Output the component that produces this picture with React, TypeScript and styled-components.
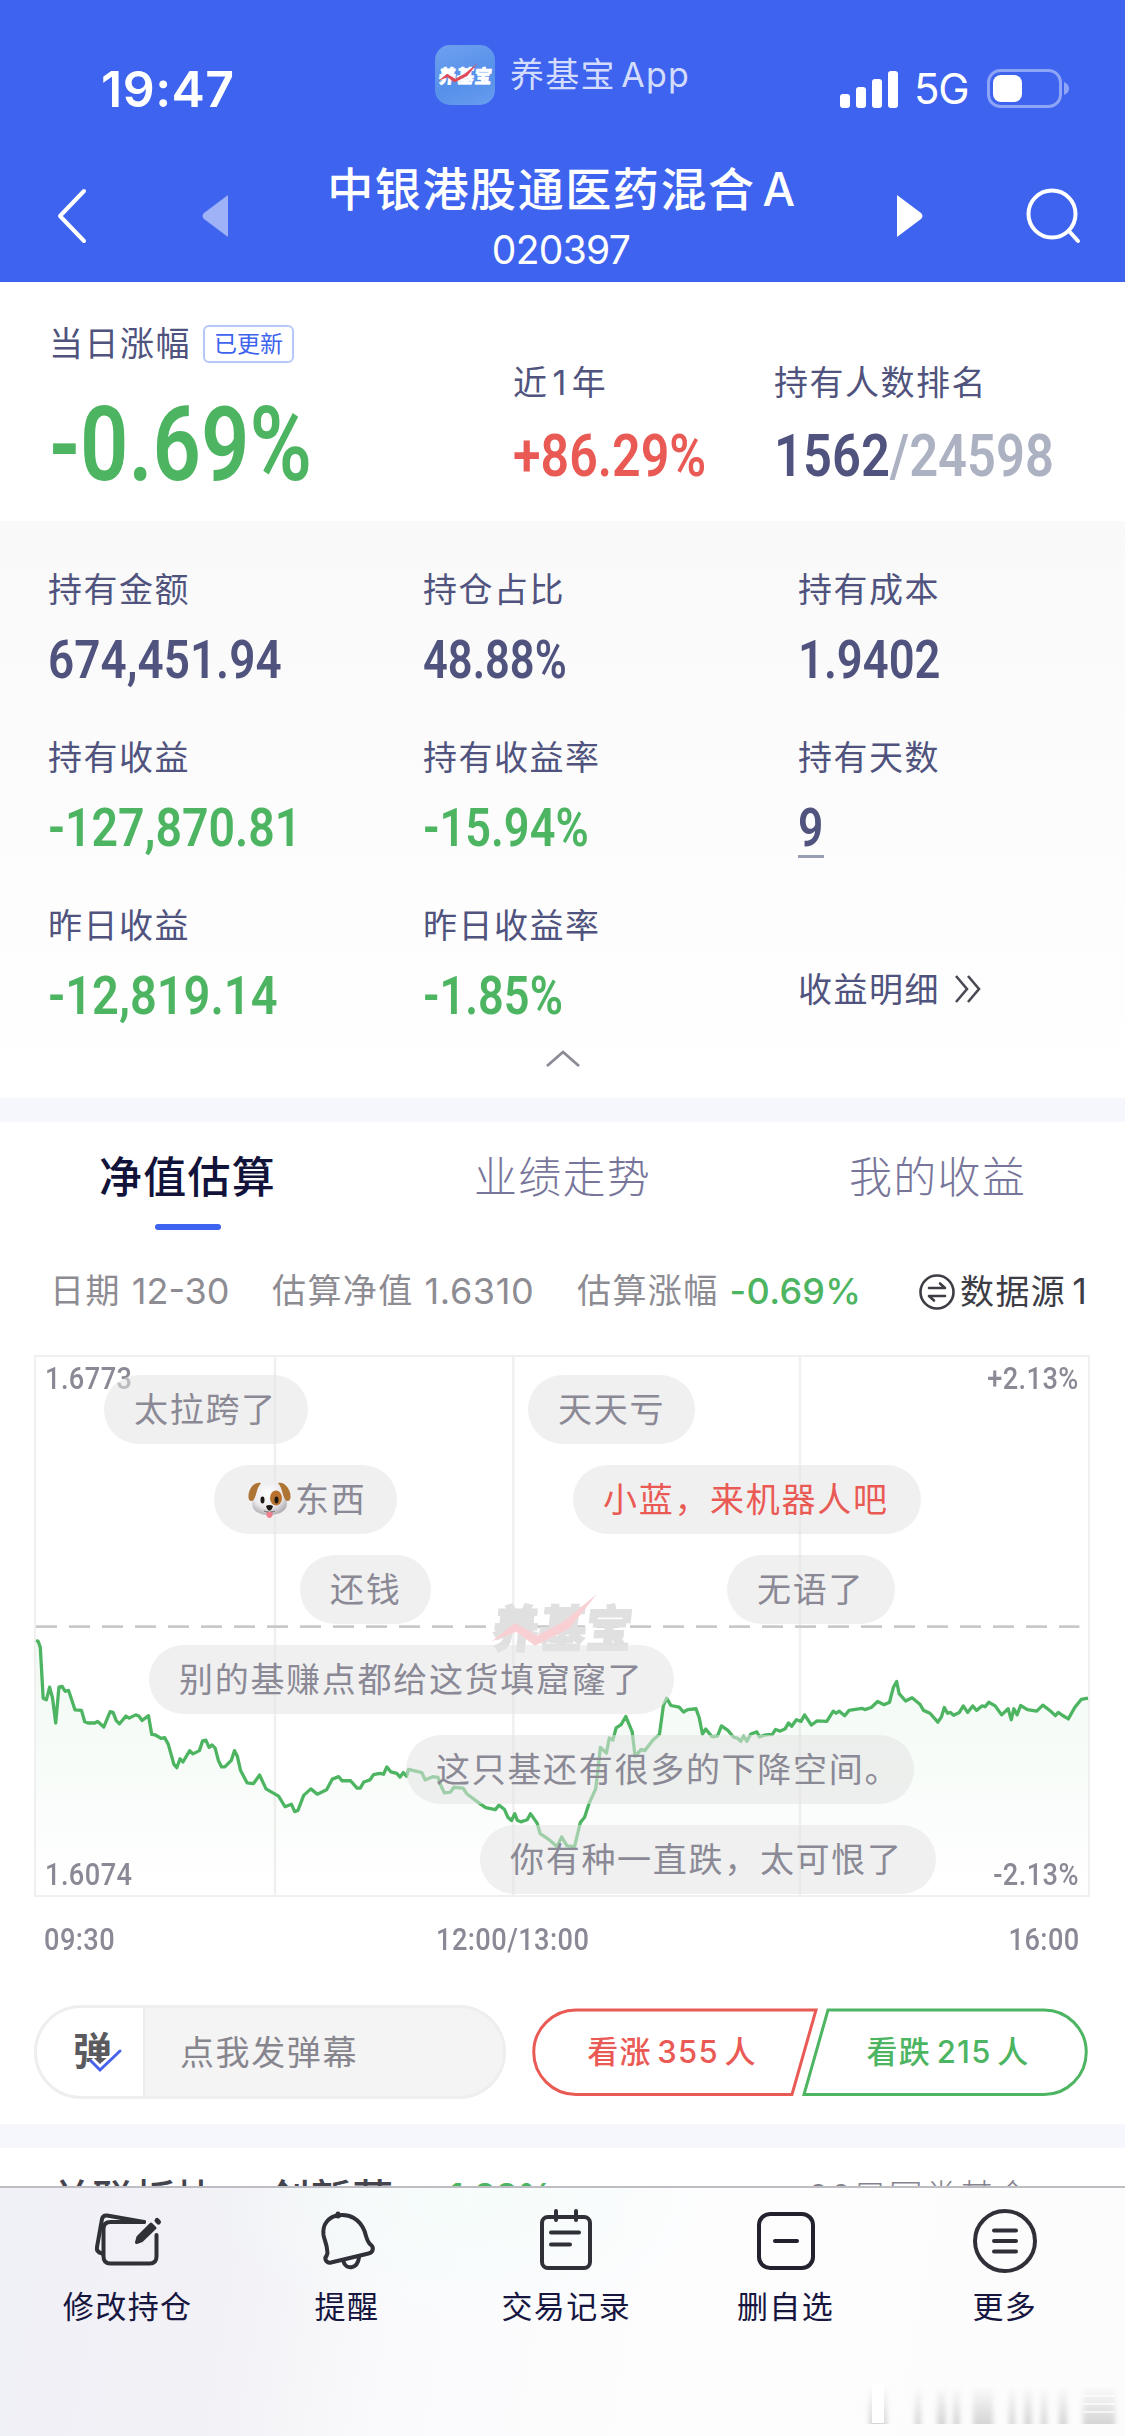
import React from "react";
import styled, { createGlobalStyle } from "styled-components";

const BLUE = "#3d63ef";
const INK = "#50537d";
const GREEN = "#4db562";
const RED = "#ea5a55";
const GRAY = "#8a8995";

const GlobalStyle = createGlobalStyle`
  * { box-sizing: border-box; }
  body {
    margin: 0;
    background: #fff;
    font-family: "Inter", "Noto Sans CJK SC", sans-serif;
  }
  svg { display: block; flex: none; overflow: visible; }
`;

const Screen = styled.main`
  width: 1125px;
  height: 2436px;
  display: flex;
  flex-direction: column;
  overflow: hidden;
  background: #fff;
  white-space: nowrap;
`;

/* ---------- header ---------- */

const Header = styled.header`
  height: 282px;
  flex: none;
  background: ${BLUE};
  color: #fff;
`;

const StatusBar = styled.div`
  height: 150px;
  display: flex;
  align-items: flex-start;
  padding-left: 101px;
`;

const Clock = styled.div`
  width: 334px;
  padding-top: 59px;
  font-size: 50px;
  font-weight: 600;
  line-height: 60px;
  letter-spacing: 0.5px;
`;

const AppTag = styled.div`
  width: 405px;
  margin-top: 45px;
  height: 60px;
  display: flex;
  align-items: center;
  gap: 15px;
  font-size: 34px;
  line-height: 58px;
  letter-spacing: 1.2px;
  word-spacing: -5px;
  color: #d3dcfc;
`;

const AppLogo = styled.div`
  width: 60px;
  height: 60px;
  border-radius: 15px;
  display: grid;
  place-items: center;
  background: linear-gradient(160deg, #6fa0ee, #5590ea 60%, #6a9dee);
`;

const Signals = styled.div`
  margin-top: 69px;
  height: 39px;
  display: flex;
  align-items: center;
`;

const Network = styled.span`
  width: 87px;
  flex: none;
  padding-left: 14px;
  font-size: 42px;
  line-height: 39px;
  letter-spacing: -1.2px;
`;

const NavBar = styled.nav`
  height: 132px;
  display: flex;
  align-items: flex-start;
`;

const NavSlot = styled.div<{ $w: number; $pad: number }>`
  width: ${(p) => p.$w}px;
  padding-left: ${(p) => p.$pad}px;
  height: 132px;
  display: flex;
  align-items: center;
`;

const TitleBlock = styled.div`
  width: 600px;
  text-align: center;
`;

const Title = styled.h1`
  margin: 10px 0 0;
  font-size: 46px;
  line-height: 58px;
  font-weight: 500;
  letter-spacing: 1.6px;
  word-spacing: -7px;
`;

const Code = styled.div`
  margin-top: 10px;
  font-size: 39px;
  line-height: 44px;
  letter-spacing: -0.7px;
  padding-right: 2px;
`;

/* ---------- shared text ---------- */

const Label = styled.span<{ $color?: string }>`
  display: block;
  font-size: 34px;
  line-height: 40px;
  letter-spacing: 1.5px;
  color: ${(p) => p.$color ?? INK};
`;

const Spaced = styled.span`
  margin: 0 4px;
`;

const Num = styled.span<{ $size: number; $color?: string; $scale?: number; $weight?: number; $space?: number; $origin?: string }>`
  display: inline-block;
  font-family: "Roboto", "Liberation Sans", sans-serif;
  font-size: ${(p) => p.$size}px;
  line-height: 1;
  font-weight: ${(p) => p.$weight ?? 600};
  letter-spacing: ${(p) => p.$space ?? 0}px;
  color: ${(p) => p.$color ?? INK};
  transform: scaleX(${(p) => p.$scale ?? 0.84});
  transform-origin: ${(p) => p.$origin ?? "left"} center;
`;

const Faint = styled.span`
  color: #adb2c3;
`;

/* ---------- day summary ---------- */

const Summary = styled.section`
  height: 239px;
  flex: none;
  display: grid;
  grid-template-columns: 464px 261px 1fr;
  padding-left: 49px;
`;

const SummaryItem = styled.div<{ $top: number; $gap: number }>`
  padding-top: ${(p) => p.$top}px;
  display: flex;
  flex-direction: column;
  align-items: flex-start;
  gap: ${(p) => p.$gap}px;
`;

const LabelLine = styled.div`
  display: flex;
  align-items: center;
  gap: 12px;
`;

const Badge = styled.span`
  width: 91px;
  height: 38px;
  border: 2px solid #b7c7fa;
  border-radius: 6px;
  font-size: 23px;
  line-height: 34px;
  text-align: center;
  color: ${BLUE};
`;

/* ---------- holdings ---------- */

const Holdings = styled.section`
  height: 577px;
  flex: none;
  padding-top: 49px;
  background: linear-gradient(#f9f9f9, #fff);
`;

const HoldingGrid = styled.div`
  display: grid;
  grid-template-columns: repeat(3, 375px);
  grid-auto-rows: 168px;
`;

const Cell = styled.div`
  padding-left: 48px;
  display: flex;
  flex-direction: column;
  align-items: flex-start;
  gap: 23px;
`;

const Underlined = styled.div`
  width: 26px;
  height: 57px;
  border-bottom: 3px solid #989eb3;
`;

const DetailLink = styled.div`
  height: 104px;
  display: flex;
  align-items: flex-end;
  gap: 14px;
`;

const LinkIcon = styled.div`
  padding-bottom: 7px;
`;

const Collapse = styled.div`
  margin-top: -24px;
  display: flex;
  justify-content: center;
`;

const Band = styled.div`
  height: 24px;
  flex: none;
  background: #f6f7fc;
`;

/* ---------- estimate card ---------- */

const Estimate = styled.section`
  height: 1002px;
  flex: none;
  background: #fff;
`;

const Tabs = styled.div`
  display: grid;
  grid-template-columns: repeat(3, 375px);
  height: 108px;
  padding-top: 28px;
`;

const Tab = styled.div<{ $active?: boolean }>`
  display: flex;
  flex-direction: column;
  align-items: center;
  gap: 19px;
  font-size: 43px;
  line-height: 55px;
  letter-spacing: 1.2px;
  font-weight: ${(p) => (p.$active ? 500 : 300)};
  color: ${(p) => (p.$active ? "#12133b" : "#77769a")};
  &::after {
    content: "";
    width: 66px;
    height: 6px;
    border-radius: 3px;
    background: ${(p) => (p.$active ? BLUE : "transparent")};
  }
`;

const InfoRow = styled.div`
  height: 125px;
  padding: 41px 0 0 50px;
  display: flex;
  align-items: flex-start;
`;

const Info = styled.div<{ $w: number; $color?: string }>`
  width: ${(p) => p.$w}px;
  display: flex;
  align-items: center;
  gap: 11px;
  font-size: 34px;
  line-height: 40px;
  letter-spacing: 1.4px;
  color: ${(p) => p.$color ?? "#8d8c93"};
`;

const Digits = styled.span<{ $color?: string; $weight?: number; $space?: number; $lead?: number }>`
  margin-left: ${(p) => p.$lead ?? 0}px;
  font-size: 36px;
  letter-spacing: ${(p) => p.$space ?? 0}px;
  font-weight: ${(p) => p.$weight ?? 400};
  color: ${(p) => p.$color ?? "inherit"};
`;

const Source = styled.div`
  display: flex;
  align-items: center;
  gap: 5px;
  font-size: 34px;
  line-height: 40px;
  letter-spacing: 1.4px;
  color: #3d3d45;
`;

const ChartFrame = styled.div`
  position: relative;
  width: 1056px;
  height: 542px;
  margin-left: 34px;
  border: 2.5px solid #f0f0f0;
`;

const Plot = styled.svg`
  width: 1052px;
  height: 538px;
  overflow: visible;
`;

const Corner = styled.div<{ $v: "top" | "bottom"; $h: "left" | "right" }>`
  position: absolute;
  ${(p) => p.$v}: 5px;
  ${(p) => p.$h}: 9px;
`;

const Watermark = styled.div`
  position: absolute;
  left: 455px;
  top: 229px;
`;

const Comment = styled.div<{ $x: number; $row: number; $w: number; $red?: boolean }>`
  position: absolute;
  left: ${(p) => p.$x - 36}px;
  top: ${(p) => 18 + p.$row * 90}px;
  width: ${(p) => p.$w}px;
  height: 69px;
  padding-left: 30px;
  border-radius: 35px;
  display: flex;
  align-items: center;
  font-size: 34px;
  line-height: 69px;
  letter-spacing: 1.7px;
  background: rgba(228, 228, 228, 0.55);
  color: ${(p) => (p.$red ? RED : GRAY)};
`;

const PuppySlot = styled.span`
  margin: 0 4px 0 4px;
`;

const Axis = styled.div`
  display: grid;
  grid-template-columns: 392px 1fr auto;
  padding: 26px 45px 0 44px;
  height: 108px;
`;

const ActionRow = styled.div`
  display: flex;
  padding-left: 34px;
  align-items: center;
  height: 94px;
`;

const InputPill = styled.div`
  width: 472px;
  height: 94px;
  border: 3px solid #eeeeee;
  border-radius: 47px;
  overflow: hidden;
  display: flex;
  background: #f4f4f4;
`;

const Toggle = styled.div`
  width: 108px;
  padding-left: 36px;
  background: #fff;
  border-right: 2px solid #ececec;
  display: flex;
  align-items: center;
`;

const Placeholder = styled.div`
  padding-left: 35px;
  font-size: 34px;
  line-height: 90px;
  letter-spacing: 1.6px;
  color: #87868e;
`;

const Vote = styled.div`
  margin-left: 25px;
`;

/* ---------- next card ---------- */

const Related = styled.section`
  height: 38px;
  flex: none;
  display: flex;
  align-items: flex-start;
  padding: 26px 0 0 51px;
`;

const RelatedTitle = styled.div<{ $w: number }>`
  width: ${(p) => p.$w}px;
  font-size: 41px;
  line-height: 50px;
  letter-spacing: 0.6px;
  font-weight: 500;
  color: #44444e;
`;

const RelatedRate = styled.div`
  width: 376px;
  font-size: 36px;
  line-height: 44px;
  letter-spacing: -0.6px;
  font-weight: 600;
  color: ${GREEN};
`;

const RelatedMore = styled.div`
  font-size: 34px;
  line-height: 45px;
  letter-spacing: 1.6px;
  font-weight: 300;
  color: #85848e;
`;

/* ---------- bottom bar ---------- */

const BottomBar = styled.footer`
  position: relative;
  height: 250px;
  flex: none;
  display: grid;
  grid-template-columns: repeat(5, 219.3px);
  padding-left: 18px;
  border-top: 2px solid #bdbdc3;
  background:
    radial-gradient(ellipse 260px 130px at 460px 10px, rgba(244, 253, 250, 0.8), rgba(244, 253, 250, 0)),
    linear-gradient(100deg, #f0f0f7 0%, #f1f1f6 20%, #fafafc 36%, #fdfdfe 60%, #fcfcfd 100%);
`;

const Action = styled.div`
  display: flex;
  flex-direction: column;
  align-items: center;
  padding-top: 18px;
  gap: 9px;
  font-size: 31px;
  line-height: 48px;
  letter-spacing: 1.4px;
  color: #17163f;
`;

const Smudge = styled.div`
  position: absolute;
  right: 6px;
  bottom: 8px;
`;

const SAMPLES: [number, number][] = [
  [98, 735], [104, 737], [110, 752], [118, 877], [127, 881], [136, 850], [144, 876], [153, 938], [162, 850], [171, 848],
  [179, 860], [189, 858], [207, 906], [225, 907], [234, 935], [243, 938], [262, 938], [270, 934], [287, 948], [305, 910],
  [313, 912], [322, 932], [331, 940], [349, 921], [358, 926], [376, 918], [385, 921], [394, 932], [412, 920], [421, 966],
  [430, 967], [447, 976], [457, 974], [467, 990], [483, 1040], [491, 1048], [500, 1026], [508, 1034], [527, 1006],
  [536, 1014], [554, 1006], [563, 982], [572, 980], [581, 998], [589, 992], [598, 1000], [607, 1030], [616, 1046],
  [625, 1046], [643, 1030], [652, 1006], [660, 1020], [669, 1055], [687, 1085], [705, 1087], [722, 1066], [740, 1100],
  [775, 1118], [793, 1144], [811, 1138], [820, 1156], [829, 1153], [845, 1116], [865, 1100], [883, 1113], [909, 1102],
  [925, 1076], [943, 1070], [952, 1080], [976, 1080], [994, 1098], [1003, 1098], [1013, 1083], [1030, 1078],
  [1040, 1065], [1058, 1062], [1068, 1064], [1077, 1046], [1088, 1058], [1105, 1062], [1114, 1071], [1123, 1060],
  [1132, 1069], [1138, 1052], [1175, 1060], [1184, 1078], [1205, 1070], [1220, 1072], [1228, 1092], [1238, 1110],
  [1255, 1108], [1264, 1096], [1290, 1098], [1300, 1112], [1335, 1135], [1353, 1146], [1380, 1151], [1390, 1140],
  [1405, 1150], [1415, 1170], [1425, 1178], [1434, 1161], [1441, 1177], [1451, 1181], [1469, 1176], [1478, 1161],
  [1497, 1185], [1505, 1210], [1530, 1225], [1552, 1242], [1565, 1218], [1580, 1240], [1601, 1242], [1617, 1183],
  [1629, 1170], [1642, 1135], [1660, 1100], [1668, 1040], [1673, 998], [1690, 1012], [1698, 975], [1708, 980],
  [1717, 950], [1731, 942], [1744, 922], [1762, 960], [1770, 1020], [1787, 1003], [1797, 1006], [1820, 980],
  [1838, 966], [1849, 895], [1858, 877], [1870, 895], [1893, 899], [1905, 911], [1917, 905], [1940, 903], [1949, 925],
  [1958, 965], [1967, 953], [1985, 972], [2000, 970], [2011, 945], [2030, 957], [2045, 973], [2055, 975], [2065, 983],
  [2073, 970], [2082, 983], [2093, 965], [2110, 960], [2117, 972], [2135, 967], [2153, 966], [2162, 954], [2175, 958],
  [2189, 952], [2198, 938], [2207, 946], [2220, 930], [2233, 934], [2243, 918], [2262, 943], [2278, 933], [2305, 934],
  [2323, 909], [2331, 914], [2340, 909], [2355, 920], [2367, 907], [2403, 902], [2411, 905], [2429, 900], [2447, 885],
  [2465, 893], [2480, 887], [2491, 850], [2500, 836], [2507, 866], [2525, 884], [2543, 876], [2565, 892], [2575, 907],
  [2593, 914], [2615, 936], [2625, 923], [2633, 900], [2642, 914], [2650, 912], [2659, 919], [2675, 912], [2686, 896],
  [2698, 912], [2712, 896], [2723, 907], [2738, 896], [2747, 898], [2757, 887], [2775, 896], [2793, 918], [2811, 903],
  [2820, 930], [2827, 903], [2836, 918], [2846, 895], [2865, 905], [2891, 909], [2908, 894], [2930, 909], [2943, 920],
  [2951, 912], [2962, 919], [2979, 928], [2997, 900], [3015, 880], [3034, 877],
];

const linePoints = SAMPLES.map((p) => p.join(",")).join(" ");

const holdings = [
  { label: "持有金额", value: "674,451.94", scale: 0.85 },
  { label: "持仓占比", value: "48.88%", scale: 0.805 },
  { label: "持有成本", value: "1.9402", scale: 0.84 },
  { label: "持有收益", value: "-127,870.81", color: GREEN, scale: 0.86 },
  { label: "持有收益率", value: "-15.94%", color: GREEN, scale: 0.835 },
  { label: "持有天数", value: "9", underline: true, scale: 0.82 },
  { label: "昨日收益", value: "-12,819.14", color: GREEN, scale: 0.87 },
  { label: "昨日收益率", value: "-1.85%", color: GREEN, scale: 0.835 },
];

const comments = [
  { text: "太拉跨了", x: 104, row: 0, w: 204 },
  { text: "天天亏", x: 528, row: 0, w: 167 },
  { text: "东西", x: 214, row: 1, w: 183, dog: true },
  { text: "小蓝，来机器人吧", x: 573, row: 1, w: 348, red: true },
  { text: "还钱", x: 300, row: 2, w: 131 },
  { text: "无语了", x: 727, row: 2, w: 168 },
  { text: "别的基赚点都给这货填窟窿了", x: 149, row: 3, w: 525 },
  { text: "这只基还有很多的下降空间。", x: 406, row: 4, w: 508 },
  { text: "你有种一直跌，太可恨了", x: 480, row: 5, w: 456 },
];

const AxisNum = ({ children, origin }: { children: string; origin?: string }) => (
  <Num $size={32} $color={GRAY} $scale={0.85} $weight={500} $space={0.5} $origin={origin}>{children}</Num>
);

const Wordmark = ({ width, fill, stroke }: { width: number; fill: string; stroke: string }) => (
  <svg width={width} height={width * 0.54} viewBox="0 0 144 78">
    <g transform="skewX(-6) translate(4 2) scale(1.05 1.12)">
      <text x="2" y="53" fontSize="44.500" fontWeight="900" fontFamily="Noto Sans CJK SC" fill={fill} stroke={fill} strokeWidth="1.500">养基宝</text>
    </g>
    <path d="M0 56L24 37L46 50L72 36L106 8L78 43L44 60L25 46Z" fill={stroke} />
  </svg>
);

const Puppy = () => (
  <svg width="43" height="38" viewBox="0 0 43 38">
    <defs>
      <radialGradient id="fur" cx="0.45" cy="0.35" r="0.65">
        <stop offset="0" stopColor="#ffffff" />
        <stop offset="0.65" stopColor="#ebe9ec" />
        <stop offset="1" stopColor="#b5b1b8" />
      </radialGradient>
    </defs>
    <path d="M7 9C10 2 16 1 21.500 1S33 2 36 9C38 15 40 22 38 27C35 32 28 34 21.500 34S8 32 5 27C3 22 5 15 7 9Z" fill="url(#fur)" />
    <path d="M13 2C6 0 0 9 .5 16c0 4 3 5 5 3C9 14 8 8 13 2ZM30 2c7-2 13 7 12.500 14c0 4-3 5-5 3C34 14 35 8 30 2Z" fill="#ad7434" />
    <ellipse cx="28" cy="17" rx="6" ry="7.500" fill="#b8722d" />
    <ellipse cx="14.500" cy="19" rx="2" ry="3.400" fill="#1d1713" />
    <ellipse cx="28.500" cy="19" rx="2" ry="3.400" fill="#1d1713" />
    <path d="M18.500 31h6v4q-3 4-6 0Z" fill="#ee7f8d" />
    <path d="M18 25q3.500-2 7 0q-1 4-3.500 4.500q-2.500-.5-3.500-4.500Z" fill="#1d1713" />
    <path d="M16 30q4 2 5.500-1q1.500 3 5.500 1" stroke="#77706c" fill="none" />
  </svg>
);

const iconStroke = { fill: "none", stroke: "#303038", strokeWidth: 4, strokeLinecap: "round", strokeLinejoin: "round" } as const;

const EditIcon = () => (
  <svg width="68" height="68" viewBox="94 2206 68 68" {...iconStroke}>
    <path d="M144 2222H110.500Q103.500 2222 103.500 2229V2256.500Q103.500 2263.500 110.500 2263.500H149.500Q156.500 2263.500 156.500 2256.500V2235" />
    <path d="M144 2222L107 2215.500Q103 2215 102 2219L97 2247Q96 2252 102 2253.500" />
    <path d="M136.500 2242.500L138 2237L151 2224L155 2228L142 2240.500Z" fill="#303038" strokeWidth="3" />
    <path d="M157 2220.500L158.500 2222" strokeWidth="5" />
  </svg>
);

const BellIcon = () => (
  <svg width="68" height="68" viewBox="314 2206 68 68" {...iconStroke}>
    <path d="M328.500 2253C328 2243 325.500 2241 324.500 2235C323 2224 330 2217.500 337 2215.800C351 2212.500 361 2220 365.500 2231C367.500 2237 368 2242 371.500 2244.500C375.500 2247.500 374 2252.500 369.500 2253.500L332 2262.500C327 2263.500 325 2258.500 327.500 2256Z" />
    <path d="M339 2216V2214" strokeWidth="5" />
    <path d="M344.500 2261.500C346.500 2270 358.500 2269.500 360 2257.500" />
  </svg>
);

const RecordIcon = () => (
  <svg width="68" height="68" viewBox="533 2206 68 68" {...iconStroke}>
    <rect x="543" y="2217" width="48" height="51" rx="6" />
    <path d="M557 2211V2220M577 2211V2220M552 2232.500H580M552 2244.500H571" />
  </svg>
);

const RemoveIcon = () => (
  <svg width="68" height="68" viewBox="752 2206 68 68" {...iconStroke} stroke="#22222e">
    <rect x="759" y="2214" width="54" height="54" rx="11" />
    <path d="M775 2241H797" />
  </svg>
);

const MoreIcon = () => (
  <svg width="68" height="68" viewBox="971 2206 68 68" {...iconStroke}>
    <circle cx="1005" cy="2241" r="30" />
    <path d="M994 2230.500H1016M994 2241H1016M994 2251.500H1016" />
  </svg>
);

const actions = [
  { label: "修改持仓", icon: <EditIcon /> },
  { label: "提醒", icon: <BellIcon /> },
  { label: "交易记录", icon: <RecordIcon /> },
  { label: "删自选", icon: <RemoveIcon /> },
  { label: "更多", icon: <MoreIcon /> },
];

export default function App() {
  return (
    <Screen>
      <GlobalStyle />
      <Header>
        <StatusBar>
          <Clock>19:47</Clock>
          <AppTag>
            <AppLogo>
              <Wordmark width={54} fill="#fff" stroke="#dd4a5c" />
            </AppLogo>
            养基宝 App
          </AppTag>
          <Signals>
            <svg width="60" height="38" viewBox="0 0 60 38" fill="#fff">
              <rect x="0" y="24" width="10" height="14" rx="3" />
              <rect x="16" y="17" width="10" height="21" rx="3" />
              <rect x="32" y="9" width="10" height="29" rx="3" />
              <rect x="48" y="1" width="10" height="37" rx="3" />
            </svg>
            <Network>5G</Network>
            <svg width="84" height="39" viewBox="0 0 84 39">
              <rect x="1.500" y="1.500" width="72" height="36" rx="12" fill="none" stroke="#8ea5f7" strokeWidth="3" />
              <rect x="6" y="6" width="29" height="27" rx="8" fill="#fff" />
              <path d="M77 13q5 2 5 6.500t-5 6.500Z" fill="#8ea5f7" />
            </svg>
          </Signals>
        </StatusBar>
        <NavBar>
          <NavSlot $w={202} $pad={56}>
            <svg width="34" height="56" viewBox="0 0 34 56" fill="none" stroke="#fff" strokeWidth="4" strokeLinecap="round" strokeLinejoin="round">
              <path d="M28 3L4 28L28 53" />
            </svg>
          </NavSlot>
          <NavSlot $w={60} $pad={0}>
            <svg width="27" height="42" viewBox="0 0 27 42"><path d="M26 0V42L2 24Q-1 21 2 18Z" fill="#9fb2f8" /></svg>
          </NavSlot>
          <TitleBlock>
            <Title>中银港股通医药混合 A</Title>
            <Code>020397</Code>
          </TitleBlock>
          <NavSlot $w={163} $pad={34}>
            <svg width="27" height="42" viewBox="0 0 27 42"><path d="M1 0V42L25 24Q28 21 25 18Z" fill="#fff" /></svg>
          </NavSlot>
          <NavSlot $w={100} $pad={0}>
            <svg width="58" height="58" viewBox="0 0 58 58" fill="none" stroke="#fff" strokeWidth="4" strokeLinecap="round">
              <circle cx="27" cy="27" r="23.500" />
              <path d="M44 44L53 54" />
            </svg>
          </NavSlot>
        </NavBar>
      </Header>

      <Summary>
        <SummaryItem $top={42} $gap={29}>
          <LabelLine>
            <Label>当日涨幅</Label>
            <Badge>已更新</Badge>
          </LabelLine>
          <Num $size={104} $color={GREEN} $scale={0.815}>-0.69%</Num>
        </SummaryItem>
        <SummaryItem $top={81} $gap={23}>
          <Label>近<Spaced>1</Spaced>年</Label>
          <Num $size={60} $color={RED} $scale={0.835}>+86.29%</Num>
        </SummaryItem>
        <SummaryItem $top={81} $gap={23}>
          <Label>持有人数排名</Label>
          <Num $size={60} $scale={0.845}>1562<Faint>/24598</Faint></Num>
        </SummaryItem>
      </Summary>

      <Holdings>
        <HoldingGrid>
          {holdings.map((h) => (
            <Cell key={h.label}>
              <Label>{h.label}</Label>
              {h.underline ? (
                <Underlined><Num $size={54} $scale={h.scale}>{h.value}</Num></Underlined>
              ) : (
                <Num $size={54} $color={h.color} $scale={h.scale}>{h.value}</Num>
              )}
            </Cell>
          ))}
          <Cell>
            <DetailLink>
              <Label>收益明细</Label>
              <LinkIcon>
                <svg width="28" height="28" viewBox="0 0 28 28" fill="none" stroke="#4a4a55" strokeWidth="2.600">
                  <path d="M2 1L13 14L2 27M14 1L25 14L14 27" />
                </svg>
              </LinkIcon>
            </DetailLink>
          </Cell>
        </HoldingGrid>
        <Collapse>
          <svg width="36" height="18" viewBox="0 0 36 18" fill="none" stroke="#8b8b95" strokeWidth="2.800">
            <path d="M2 16L18 2L34 16" />
          </svg>
        </Collapse>
      </Holdings>
      <Band />

      <Estimate>
        <Tabs>
          <Tab $active>净值估算</Tab>
          <Tab>业绩走势</Tab>
          <Tab>我的收益</Tab>
        </Tabs>
        <InfoRow>
          <Info $w={222}>日期<Digits>12-30</Digits></Info>
          <Info $w={305}>估算净值<Digits $space={0.6}>1.6310</Digits></Info>
          <Info $w={342}>估算涨幅<Digits $color={GREEN} $weight={500} $space={0.3}>-0.69%</Digits></Info>
          <Source>
            <svg width="36" height="36" viewBox="0 0 36 36" fill="none" stroke="#3d3d45" strokeWidth="2.600" strokeLinecap="round" strokeLinejoin="round">
              <circle cx="18" cy="18" r="16.500" />
              <path d="M10 14H26L21 9.500M26 22H10L15 26.500" />
            </svg>
            <span>数据源<Digits $lead={6}>1</Digits></span>
          </Source>
        </InfoRow>
        <ChartFrame>
          <Plot viewBox="98 38 2936 1323" preserveAspectRatio="none">
            <defs>
              <linearGradient id="area" x1="0" y1="0" x2="0" y2="1">
                <stop offset="0" stopColor={GREEN} stopOpacity="0.08" />
                <stop offset="1" stopColor={GREEN} stopOpacity="0" />
              </linearGradient>
            </defs>
            <path d="M765 38V1361M1430 38V1361M2230 38V1361" stroke="#f0f0f0" strokeWidth="2.500" vectorEffect="non-scaling-stroke" />
            <path d="M98 701H3010" stroke="#c9c9c9" strokeWidth="2.800" strokeDasharray="21 12" vectorEffect="non-scaling-stroke" />
            <polygon points={`98,1361 ${linePoints} 3034,1361`} fill="url(#area)" />
            <polyline points={linePoints} fill="none" stroke={GREEN} strokeWidth="3.300" strokeLinejoin="round" vectorEffect="non-scaling-stroke" />
          </Plot>
          <Corner $v="top" $h="left"><AxisNum>1.6773</AxisNum></Corner>
          <Corner $v="bottom" $h="left"><AxisNum>1.6074</AxisNum></Corner>
          <Corner $v="top" $h="right"><AxisNum origin="right">+2.13%</AxisNum></Corner>
          <Corner $v="bottom" $h="right"><AxisNum origin="right">-2.13%</AxisNum></Corner>
          <Watermark><Wordmark width={144} fill="#e0e0e0" stroke="#f8d0d4" /></Watermark>
          {comments.map((c) => (
            <Comment key={c.text} $x={c.x} $row={c.row} $w={c.w} $red={c.red}>
              {c.dog && <PuppySlot><Puppy /></PuppySlot>}
              {c.text}
            </Comment>
          ))}
        </ChartFrame>
        <Axis>
          <AxisNum>09:30</AxisNum>
          <AxisNum>12:00/13:00</AxisNum>
          <AxisNum origin="right">16:00</AxisNum>
        </Axis>
        <ActionRow>
          <InputPill>
            <Toggle>
              <svg width="50" height="64" viewBox="0 -9 50 64">
                <text x="0" y="36" fontSize="39" fontWeight="700" fontFamily="Noto Sans CJK SC" fill="#5b5b5f">弹</text>
                <path d="M18 31L27 40L47 21" fill="none" stroke="#fff" strokeWidth="7" />
                <path d="M18 32L27 41L47 22" fill="none" stroke="#4763ea" strokeWidth="3" strokeLinecap="round" />
              </svg>
            </Toggle>
            <Placeholder>点我发弹幕</Placeholder>
          </InputPill>
          <Vote>
            <svg width="560" height="90" viewBox="531 2007 560 90" fontFamily="Inter, 'Noto Sans CJK SC', sans-serif" fontSize="31" fontWeight="500" textAnchor="middle">
              <path d="M576 2010H816L792 2094.500H576A42.250 42.250 0 0 1 576 2010Z" fill="none" stroke={RED} strokeWidth="3" />
              <path d="M1044 2010H828L804 2094.500H1044A42.250 42.250 0 0 0 1044 2010Z" fill="none" stroke={GREEN} strokeWidth="3" />
              <text x="672" y="2063" fill={RED} letterSpacing="1.300" wordSpacing="-4">看涨 355 人</text>
              <text x="948" y="2063" fill={GREEN} letterSpacing="1.300" wordSpacing="-4">看跌 215 人</text>
            </svg>
          </Vote>
        </ActionRow>
      </Estimate>
      <Band />

      <Related>
        <RelatedTitle $w={218}>关联板块</RelatedTitle>
        <RelatedTitle $w={163}>创新药</RelatedTitle>
        <RelatedRate>-1.22%</RelatedRate>
        <RelatedMore>20只同类基金 ›</RelatedMore>
      </Related>

      <BottomBar>
        {actions.map((a) => (
          <Action key={a.label}>
            {a.icon}
            {a.label}
          </Action>
        ))}
        <Smudge>
          <svg width="250" height="44" viewBox="0 0 250 44">
            <defs>
              <linearGradient id="smear" x1="0" y1="0" x2="0" y2="1">
                <stop offset="0" stopColor="#bbb" stopOpacity="0" />
                <stop offset="1" stopColor="#bbb" stopOpacity="0.6" />
              </linearGradient>
              <filter id="soft" x="-5%" y="-5%" width="110%" height="110%"><feGaussianBlur stdDeviation="2.500 0.6" /></filter>
            </defs>
            <g fill="url(#smear)" filter="url(#soft)">
              <rect x="0" y="2" width="18" height="38" />
              <rect x="46" y="2" width="6" height="38" />
              <rect x="68" y="2" width="9" height="38" />
              <rect x="84" y="2" width="7" height="38" />
              <rect x="104" y="2" width="20" height="38" />
              <rect x="140" y="2" width="6" height="38" />
              <rect x="155" y="2" width="8" height="38" />
              <rect x="172" y="2" width="6" height="38" />
              <rect x="190" y="2" width="8" height="38" />
              <rect x="214" y="2" width="32" height="38" />
            </g>
            <rect x="3" y="0" width="12" height="39" fill="#fff" />
            <path d="M214 12H246M214 20H246M214 28H246" stroke="#fff" strokeWidth="2" opacity="0.7" />
          </svg>
        </Smudge>
      </BottomBar>
    </Screen>
  );
}
